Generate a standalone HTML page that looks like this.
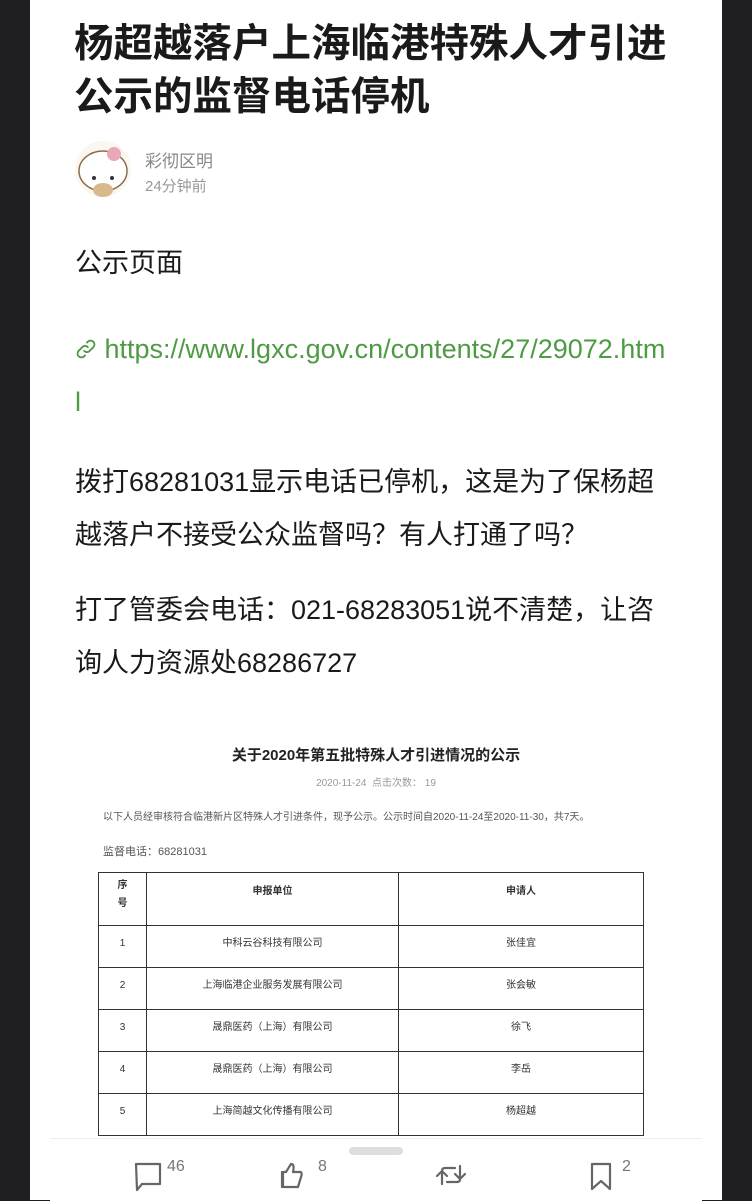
<!DOCTYPE html>
<html><head><meta charset="utf-8"><style>
body{margin:0;width:752px;height:1200px;background:#1f1f21;font-family:"Liberation Sans","Noto Sans CJK SC",sans-serif;overflow:hidden}
.p{position:absolute;left:30px;top:0;width:692px;height:1200px;background:#fff}
.a{position:absolute;white-space:nowrap}
h1{position:absolute;left:74px;top:18px;margin:0;font-size:39.5px;line-height:53px;font-weight:bold;color:#1a1a1a}
.b{font-size:27px;color:#1a1a1a;line-height:53px}
.t{position:absolute;left:98px;top:872px;border-collapse:collapse;font-size:10px;color:#333}
.t td{border:1px solid #333;text-align:center;height:42px;box-sizing:border-box;vertical-align:top;padding:12px 0 0 0;line-height:12px}
</style></head><body>
<div class="p"></div>
<h1>杨超越落户上海临港特殊人才引进<br>公示的监督电话停机</h1>
<svg class="a" style="left:74px;top:140px" width="58" height="58" viewBox="0 0 58 58"><circle cx="29" cy="29" r="28" fill="#fbf6f0"/><ellipse cx="29" cy="31" rx="24" ry="20" fill="#fff" stroke="#8a6d4a" stroke-width="1.5"/><circle cx="40" cy="14" r="7" fill="#e9a8b8"/><circle cx="20" cy="38" r="2" fill="#333"/><circle cx="38" cy="38" r="2" fill="#333"/><ellipse cx="29" cy="50" rx="10" ry="7" fill="#d8b98c"/></svg>
<div class="a" style="left:145px;top:147px;font-size:17px;color:#888">彩彻区明</div>
<div class="a" style="left:145px;top:175px;font-size:15px;color:#999">24分钟前</div>
<div class="a b" style="left:75px;top:237px">公示页面</div>
<div class="a b" style="left:75px;top:323px;color:#4f9a44"><svg width="22" height="22" viewBox="0 0 24 24" fill="none" stroke="#4f9a44" stroke-width="2" stroke-linecap="round" style="vertical-align:-2px"><path d="M10 14a4 4 0 0 0 6 0l4-4a4 4 0 0 0-6-6l-1 1M14 10a4 4 0 0 0-6 0l-4 4a4 4 0 0 0 6 6l1-1"/></svg> https://www.lgxc.gov.cn/contents/27/29072.htm<br>l</div>
<div class="a b" style="left:75px;top:456px">拨打68281031显示电话已停机，这是为了保杨超<br>越落户不接受公众监督吗？有人打通了吗？</div>
<div class="a b" style="left:75px;top:584px">打了管委会电话：021-68283051说不清楚，让咨<br>询人力资源处68286727</div>
<div class="a" style="left:0;width:752px;text-align:center;top:744px;font-size:15px;font-weight:bold;color:#222">关于2020年第五批特殊人才引进情况的公示</div>
<div class="a" style="left:0;width:752px;text-align:center;top:774px;font-size:10px;color:#999">2020-11-24 &nbsp;点击次数： 19</div>
<div class="a" style="left:103px;top:808px;font-size:10px;color:#555">以下人员经审核符合临港新片区特殊人才引进条件，现予公示。公示时间自2020-11-24至2020-11-30，共7天。</div>
<div class="a" style="left:103px;top:843px;font-size:11px;color:#555">监督电话：68281031</div>
<table class="t"><tr><td style="width:48px;height:53px;font-weight:bold;padding-top:4px;line-height:18px">序<br>号</td><td style="width:252px;font-weight:bold;padding-top:13px">申报单位</td><td style="width:245px;font-weight:bold;padding-top:13px">申请人</td></tr>
<tr><td>1</td><td>中科云谷科技有限公司</td><td>张佳宜</td></tr>
<tr><td>2</td><td>上海临港企业服务发展有限公司</td><td>张会敏</td></tr>
<tr><td>3</td><td>晟鼎医药（上海）有限公司</td><td>徐飞</td></tr>
<tr><td>4</td><td>晟鼎医药（上海）有限公司</td><td>李岳</td></tr>
<tr><td>5</td><td>上海简越文化传播有限公司</td><td>杨超越</td></tr></table>
<div class="a" style="left:50px;top:1138px;width:652px;height:62px;background:#fff;border-top:1px solid #eee"></div>
<div class="a" style="left:349px;top:1147px;width:54px;height:8px;border-radius:4px;background:#ddd"></div>
<svg class="a" style="left:130px;top:1160px" width="620" height="40" fill="none" stroke="#666" stroke-width="2.2" stroke-linejoin="round" stroke-linecap="round">
<path d="M6 4h24v20H12l-5 6z"/>
<path d="M156 12l5-8c3 0 3 3 2 8h7c2 0 2 3 1 5l-3 10h-15v-15z M152 12v15"/>
<path d="M312 24v-13c0-2 1-3 3-3h10 M307 16l5-5 5 5 M330 6v13c0 2-1 3-3 3h-10 M335 14l-5 5-5-5"/>
<path d="M462 4h18v25l-9-8-9 8z"/>
</svg>
<div class="a" style="left:167px;top:1158px;font-size:16px;color:#777">46</div>
<div class="a" style="left:318px;top:1158px;font-size:16px;color:#777">8</div>
<div class="a" style="left:622px;top:1158px;font-size:16px;color:#777">2</div>
</body></html>
